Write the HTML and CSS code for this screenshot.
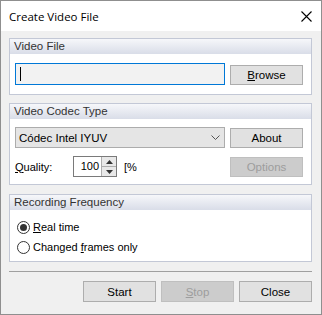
FILE: index.html
```html
<!DOCTYPE html>
<html lang="en">
<head>
  <meta charset="UTF-8" />
  <title>Create Video File</title>
  <link rel="stylesheet" href="styles.css">
</head>
<body>
  <div class="window">
    <div class="titlebar">
      <span class="title">Create Video File</span>
      <svg class="close-x" width="11" height="11" viewBox="0 0 11 11">
        <path d="M0.5 0.5 L10.5 10.5 M10.5 0.5 L0.5 10.5" stroke="#000" stroke-width="1.1" fill="none"/>
      </svg>
    </div>

    <div class="client">
      <div class="group group-file">
        <div class="group-header">Video File</div>
        <div class="group-body row">
          <div class="edit"><span class="caret"></span></div>
          <button class="btn"><u>B</u>rowse</button>
        </div>
      </div>

      <div class="group group-codec">
        <div class="group-header">Video Codec Type</div>
        <div class="group-body">
          <div class="row">
            <div class="combo">
              <span>Códec Intel IYUV</span>
              <svg class="chevron" width="9" height="5" viewBox="0 0 9 5">
                <path d="M0.5 0.5 L4.5 4.5 L8.5 0.5" stroke="#555" stroke-width="1" fill="none"/>
              </svg>
            </div>
            <button class="btn btn-about">About</button>
          </div>
          <div class="row row-quality">
            <span class="label"><u>Q</u>uality:</span>
            <div class="spin">
              <span class="spin-value">100</span>
              <div class="spin-buttons">
                <span class="spin-btn">
                  <svg width="7" height="4" viewBox="0 0 7 4"><path d="M0 4 L3.5 0 L7 4 Z" fill="#333"/></svg>
                </span>
                <span class="spin-btn">
                  <svg width="7" height="4" viewBox="0 0 7 4"><path d="M0 0 L3.5 4 L7 0 Z" fill="#333"/></svg>
                </span>
              </div>
            </div>
            <span class="unit">[%</span>
            <button class="btn btn-options" disabled>Options</button>
          </div>
        </div>
      </div>

      <div class="group group-freq">
        <div class="group-header">Recording Frequency</div>
        <div class="group-body">
          <label class="radio"><span class="dot checked"></span><span><u>R</u>eal time</span></label>
          <label class="radio"><span class="dot"></span><span>Changed <u>f</u>rames only</span></label>
        </div>
      </div>

      <div class="separator"></div>

      <div class="footer">
        <button class="btn">Start</button>
        <button class="btn" disabled><u>S</u>top</button>
        <button class="btn">Close</button>
      </div>
    </div>
  </div>
</body>
</html>
```

FILE: styles.css
```css
body {
  margin: 0;
  background: #f0f0f0;
  font-family: 'Liberation Sans', Arial, sans-serif;
  font-size: 11px;
  color: #000;
}

.window {
  width: 322px;
  height: 315px;
  box-sizing: border-box;
  border: 1px solid #8f8f8f;
  background: #f0f0f0;
  display: flex;
  flex-direction: column;
}

.titlebar {
  height: 30px;
  background: #fff;
  display: flex;
  align-items: center;
  justify-content: space-between;
  padding: 0 9px 0 8px;
}

.title {
  font-family: 'Open Sans', 'Liberation Sans', sans-serif;
  font-size: 11.5px;
  color: #000;
  margin-top: 1px;
}

.close-x {
  margin-top: 1px;
}

.client {
  padding: 7px 9px 0 8px;
}

.group {
  border: 1px solid #c3c8d6;
  background: #fff;
}

.group + .group {
  margin-top: 8px;
}

.group-freq {
  margin-top: 9px !important;
}

.group-header {
  height: 15px;
  line-height: 15px;
  padding-left: 4px;
  font-size: 11.5px;
  color: #333;
  background: linear-gradient(#f6f7fa, #d9dde8);
}

.group-body {
  padding: 9px 8px 9px 5px;
}

.row {
  display: flex;
  align-items: flex-end;
  gap: 5px;
}

.edit {
  width: 210px;
  height: 22px;
  box-sizing: border-box;
  border: 1px solid #0078d7;
  background: #f2f2f2;
  display: flex;
  align-items: center;
  padding-left: 4px;
}

.caret {
  width: 1px;
  height: 14px;
  background: #000;
}

.btn {
  width: 73px;
  height: 20px;
  box-sizing: border-box;
  border: 1px solid #adadad;
  background: #e1e1e1;
  font-family: inherit;
  font-size: 11.5px;
  color: #000;
  padding: 0;
  margin: 0;
}

.btn:disabled {
  background: #cccccc;
  border-color: #bfbfbf;
  color: #9d9d9d;
}

.group-codec .group-body {
  padding: 8px 8px 7px 5px;
}

.combo {
  width: 210px;
  height: 21px;
  box-sizing: border-box;
  border: 1px solid #acacac;
  background: #e5e5e5;
  display: flex;
  align-items: center;
  justify-content: space-between;
  padding: 0 4px 0 3px;
  font-size: 11.5px;
}

.row-quality {
  margin-top: 8px;
  align-items: center;
  gap: 0;
}

.label {
  width: 58px;
}

.spin {
  width: 44px;
  height: 21px;
  box-sizing: border-box;
  border: 1px solid #7a7a7a;
  background: #fff;
  display: flex;
  align-items: stretch;
}

.spin-value {
  flex: 1;
  text-align: right;
  line-height: 19px;
  padding-right: 2px;
}

.spin-buttons {
  width: 14px;
  display: flex;
  flex-direction: column;
  border-left: 1px solid #adadad;
}

.spin-btn {
  flex: 1;
  display: flex;
  align-items: center;
  justify-content: center;
  background: #e8e8e8;
}

.spin-btn + .spin-btn {
  border-top: 1px solid #adadad;
}

.unit {
  margin-left: 7px;
  flex: 1;
}

.btn-options {
  align-self: flex-end;
}

.group-freq .group-body {
  padding: 7px 8px 4px 7px;
}

.radio {
  display: flex;
  align-items: center;
  height: 20px;
  gap: 3px;
}

.dot {
  width: 13px;
  height: 13px;
  box-sizing: border-box;
  border: 1px solid #333;
  border-radius: 50%;
  background: #fff;
  display: flex;
  align-items: center;
  justify-content: center;
}

.dot.checked::after {
  content: "";
  width: 7px;
  height: 7px;
  border-radius: 50%;
  background: #333;
}

.separator {
  margin-top: 9px;
  height: 1px;
  background: #a0a0a0;
}

.footer {
  display: flex;
  justify-content: flex-end;
  gap: 5px;
  margin-top: 9px;
}

.footer .btn {
  height: 21px;
}
```
